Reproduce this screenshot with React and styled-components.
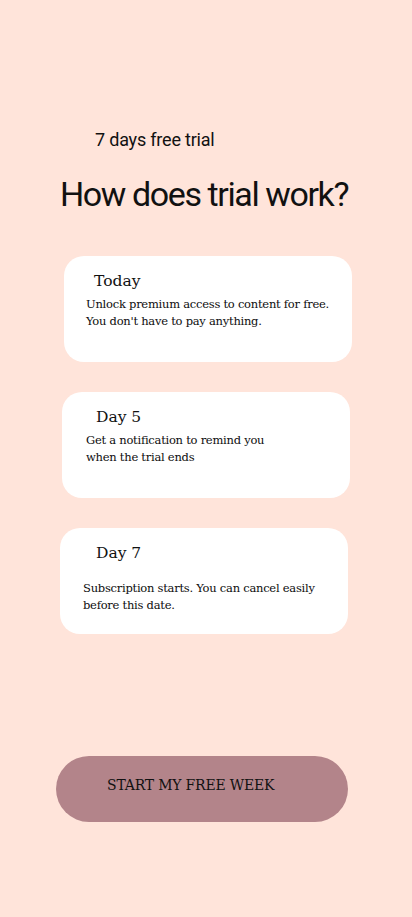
import React from "react";
import styled, { createGlobalStyle } from "styled-components";

const Global = createGlobalStyle`
  html, body { margin: 0; padding: 0; background: #FFE4DA; }
  #root { min-height: 917px; }
`;

const Page = styled.main`
  width: 412px;
  min-height: 917px;
  box-sizing: border-box;
  background: #FFE4DA;
  display: flex;
  flex-direction: column;
  padding-top: 126px;
`;

const Subtitle = styled.p`
  margin: 0 0 0 95px;
  font-family: Roboto, "Noto Sans", sans-serif;
  font-size: 18px;
  line-height: 28px;
  color: #111;
  letter-spacing: -0.2px;
`;

const Heading = styled.h1`
  margin: 18px 0 0 60px;
  font-family: Roboto, "Noto Sans", sans-serif;
  font-weight: 400;
  font-size: 34px;
  line-height: 44px;
  color: #111;
  letter-spacing: -1.4px;
`;

const Cards = styled.section`
  display: flex;
  flex-direction: column;
  gap: 30px;
  margin-top: 40px;
`;

const Card = styled.article`
  margin-left: ${(p) => p.$left}px;
  width: 288px;
  height: 106px;
  box-sizing: border-box;
  background: #fff;
  border-radius: 20px;
  padding: 14px 16px 0 ${(p) => p.$bodyLeft}px;
`;

const CardTitle = styled.h2`
  margin: 0 0 0 ${(p) => p.$indent}px;
  font-family: "DejaVu Serif", serif;
  font-weight: 400;
  font-size: 15.5px;
  line-height: 22px;
  color: #111;
`;

const CardBody = styled.p`
  margin: ${(p) => p.$gap}px 0 0 0;
  font-family: "DejaVu Serif", serif;
  font-size: 11.5px;
  line-height: 17px;
  color: #0d0d0d;
  letter-spacing: -0.25px;
`;

const Footer = styled.div`
  margin-top: 122px;
  margin-left: 56px;
`;

const StartButton = styled.button`
  width: 292px;
  height: 66px;
  border: none;
  border-radius: 33px;
  background: #B3848A;
  color: #111;
  font-family: "DejaVu Serif", serif;
  font-size: 14px;
  letter-spacing: -0.2px;
  text-align: left;
  padding: 0 0 8px 51px;
  cursor: pointer;
`;

const steps = [
  { title: "Today", left: 64, bodyLeft: 22, indent: 8, gap: 4, lines: ["Unlock premium access to content for free.", "You don't have to pay anything."] },
  { title: "Day 5", left: 62, bodyLeft: 24, indent: 10, gap: 4, lines: ["Get a notification to remind you", "when the trial ends"] },
  { title: "Day 7", left: 60, bodyLeft: 23, indent: 13, gap: 16, lines: ["Subscription starts. You can cancel easily", "before this date."] },
];

export default function App() {
  return (
    <Page>
      <Global />
      <Subtitle>7 days free trial</Subtitle>
      <Heading>How does trial work?</Heading>
      <Cards>
        {steps.map((s) => (
          <Card key={s.title} $left={s.left} $bodyLeft={s.bodyLeft}>
            <CardTitle $indent={s.indent}>{s.title}</CardTitle>
            <CardBody $gap={s.gap}>
              {s.lines[0]}
              <br />
              {s.lines[1]}
            </CardBody>
          </Card>
        ))}
      </Cards>
      <Footer>
        <StartButton>START MY FREE WEEK</StartButton>
      </Footer>
    </Page>
  );
}
